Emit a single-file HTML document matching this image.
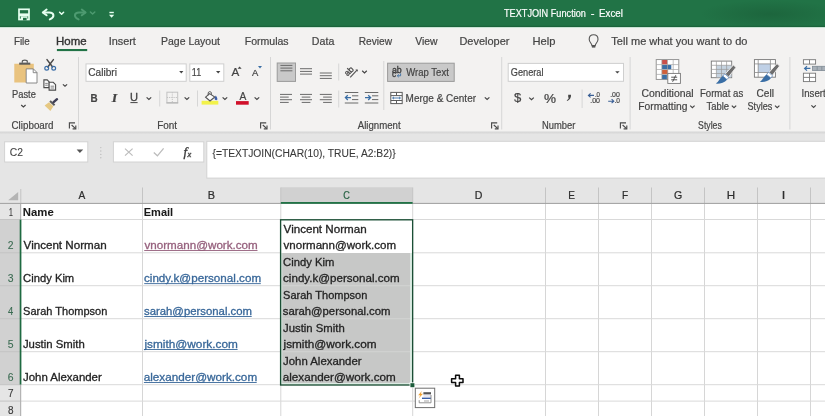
<!DOCTYPE html>
<html><head><meta charset="utf-8"><title>TEXTJOIN Function - Excel</title>
<style>
html,body{margin:0;padding:0;background:#fff}
body{width:825px;height:416px;overflow:hidden;position:relative;font-family:"Liberation Sans",sans-serif}
#bg{position:absolute;left:0;top:0;width:825px;height:416px;display:block;will-change:transform}
.t{position:absolute;line-height:1;white-space:pre;transform-origin:0 0;display:block}
.u{position:absolute;height:1px;display:block}
</style></head><body>
<svg id="bg" width="825" height="416" viewBox="0 0 825 416">
<defs>
<linearGradient id="shd" x1="0" y1="0" x2="0" y2="1"><stop offset="0" stop-color="#d2d2d2"/><stop offset="1" stop-color="#e5e5e5"/></linearGradient>
<radialGradient id="cl" cx="0.5" cy="0.5" r="0.5"><stop offset="0" stop-color="#1c643c" stop-opacity=".9"/><stop offset="1" stop-color="#1c643c" stop-opacity="0"/></radialGradient>
</defs>
<!-- title bar -->
<rect x="0" y="0" width="825" height="27.4" fill="#217346"/>
<ellipse cx="770" cy="14" rx="70" ry="14" fill="url(#cl)"/>
<rect x="0" y="25.8" width="825" height="1.4" fill="#1b633b"/>
<rect x="0" y="27.2" width="825" height="1.2" fill="#d9efe3"/>
<!-- ribbon -->
<rect x="0" y="28.2" width="825" height="103.5" fill="#f3f2f1"/>
<rect x="0" y="131.5" width="825" height="3" fill="url(#shd)"/>
<rect x="0" y="134" width="825" height="70" fill="#e5e5e5"/>
<!-- home underline -->
<rect x="56.9" y="49" width="30.3" height="2.1" fill="#217346"/>
<!-- group separators -->
<g fill="#d6d6d6">
<rect x="78" y="57" width="1" height="72.5"/>
<rect x="270" y="57" width="1" height="72.5"/>
<rect x="501.2" y="57" width="1" height="72.5"/>
<rect x="629.6" y="57" width="1" height="72.5"/>
<rect x="789.4" y="57" width="1" height="72.5"/>
<rect x="383.3" y="61" width="1" height="49"/>
<rect x="159.2" y="90.5" width="1" height="16"/>
<rect x="197" y="90.5" width="1" height="16"/>
<rect x="338.2" y="63.5" width="1" height="17"/>
<rect x="338.2" y="90.5" width="1" height="17"/>
<rect x="581.6" y="89.5" width="1" height="18.5"/>
</g>
<!-- ribbon boxes -->
<g fill="#fff" stroke="#cfcfcf" stroke-width="1">
<rect x="86" y="63.9" width="100.2" height="17.4"/>
<rect x="189.8" y="63.9" width="34" height="17.4"/>
<rect x="508.2" y="63.4" width="115.3" height="17.9"/>
</g>
<g fill="#c9c9c9" stroke="#9b9b9b" stroke-width="1">
<rect x="277.2" y="63" width="18.3" height="18.4"/>
<rect x="387.6" y="63.2" width="66.6" height="18.2"/>
</g>
<!-- formula bar -->
<g fill="#fff" stroke="#d2d2d2" stroke-width="1">
<rect x="4.6" y="141.8" width="83.2" height="20.2"/>
<rect x="113.4" y="141.8" width="90.4" height="20.2"/>
<rect x="206.8" y="141.3" width="640" height="36.8"/>
</g>
<!-- sheet -->
<rect x="0" y="203" width="21" height="213" fill="#e5e5e5"/>
<rect x="21" y="204" width="805" height="213" fill="#fff"/>
<!-- selected headers -->
<rect x="280.8" y="187.3" width="131.7" height="16" fill="#d1d1d1"/>
<rect x="0" y="219.6" width="20.8" height="165" fill="#d1d1d1"/>
<!-- selected gray cells -->
<rect x="281" y="253" width="131.5" height="132" fill="#dcebe3"/>
<rect x="282.3" y="253" width="127.7" height="130" fill="#c7c8c7"/>
<!-- grid lines vertical -->
<g fill="#d6d6d6">
<rect x="142" y="203.5" width="1" height="213"/>
<rect x="545" y="203.5" width="1" height="213"/>
<rect x="598" y="203.5" width="1" height="213"/>
<rect x="651" y="203.5" width="1" height="213"/>
<rect x="704" y="203.5" width="1" height="213"/>
<rect x="757" y="203.5" width="1" height="213"/>
<rect x="810" y="203.5" width="1" height="213"/>
<rect x="280.3" y="203.5" width="1" height="16"/><rect x="280.3" y="385" width="1" height="31"/>
<rect x="412.2" y="203.5" width="1" height="16"/><rect x="412.2" y="386" width="1" height="30"/>
</g>
<!-- grid lines horizontal -->
<g fill="#d9d9d9">
<rect x="20.8" y="219" width="805" height="1"/>
<rect x="20.8" y="252.3" width="260" height="1"/><rect x="413" y="252.3" width="412" height="1"/>
<rect x="20.8" y="285.2" width="260" height="1"/><rect x="413" y="285.2" width="412" height="1"/>
<rect x="20.8" y="318.2" width="260" height="1"/><rect x="413" y="318.2" width="412" height="1"/>
<rect x="20.8" y="351.2" width="260" height="1"/><rect x="413" y="351.2" width="412" height="1"/>
<rect x="20.8" y="384.2" width="260" height="1"/><rect x="413" y="384.2" width="412" height="1"/>
<rect x="20.8" y="400.6" width="805" height="1"/>
</g>
<g fill="#d3d4d3">
<rect x="282.3" y="285.2" width="127.7" height="1"/>
<rect x="282.3" y="318.2" width="127.7" height="1"/>
<rect x="282.3" y="351.2" width="127.7" height="1"/>
</g>
<!-- header lines -->
<g fill="#c4c4c4">
<rect x="20.3" y="189" width="1" height="14"/>
<rect x="142" y="187.5" width="1" height="16"/>
<rect x="280.3" y="187.5" width="1" height="16"/>
<rect x="412.2" y="187.5" width="1" height="16"/>
<rect x="545" y="187.5" width="1" height="16"/>
<rect x="598" y="187.5" width="1" height="16"/>
<rect x="651" y="187.5" width="1" height="16"/>
<rect x="704" y="187.5" width="1" height="16"/>
<rect x="757" y="187.5" width="1" height="16"/>
<rect x="810" y="187.5" width="1" height="16"/>
<rect x="0" y="219" width="20" height="1"/>
<rect x="0" y="252.3" width="20" height="1"/>
<rect x="0" y="285.2" width="20" height="1"/>
<rect x="0" y="318.2" width="20" height="1"/>
<rect x="0" y="351.2" width="20" height="1"/>
<rect x="0" y="384.2" width="20" height="1"/>
<rect x="0" y="400.6" width="20" height="1"/>
</g>
<rect x="0" y="202.9" width="825" height="1" fill="#a0a0a0"/>
<rect x="20.2" y="203" width="1" height="16.5" fill="#a8a8a8"/>
<rect x="20.2" y="385" width="1" height="31" fill="#a8a8a8"/>
<!-- corner triangle -->
<path d="M18.2 192 L18.2 200.2 L8.2 200.2 Z" fill="#b4b4b4"/>
<!-- green selection indicators -->
<rect x="280.8" y="202" width="131.8" height="1.8" fill="#217346"/>
<rect x="19.7" y="219.6" width="1.7" height="165" fill="#1e6a41"/>
<!-- selection border -->
<rect x="280.6" y="219.8" width="132.05" height="165.2" fill="none" stroke="#1b4f35" stroke-width="1.35"/>
<rect x="409.6" y="382.4" width="5.2" height="5.2" fill="#fff"/>
<rect x="410.4" y="383.2" width="4" height="4" fill="#1c5c3a"/>
<g style="opacity:.999">
<!-- ===== title bar icons ===== -->
<rect x="19" y="9.3" width="10" height="10.2" fill="none" stroke="#e6fff0" stroke-width="1.7"/>
<rect x="19" y="13.4" width="10" height="2.9" fill="#e6fff0"/>
<rect x="20.8" y="16.3" width="6.6" height="3.6" fill="#e6fff0"/>
<rect x="23" y="17.8" width="3.6" height="2.6" fill="#217346"/>
<g fill="none" stroke="#e6fff0" stroke-width="2" stroke-linecap="round" stroke-linejoin="round">
<path d="M46.6 9.5 L42.8 12.5 L46.6 15.3"/>
<path d="M43.4 12.5 H49.3 C54.4 12.5 55 17.4 49.8 19.4"/>
<path d="M59.6 12.3 L61.6 14.3 L63.6 12.3" stroke-width="1.5"/>
</g>
<g fill="none" stroke="#4d9a70" stroke-width="2" stroke-linecap="round" stroke-linejoin="round">
<path d="M81.8 9.5 L85.6 12.5 L81.8 15.3"/>
<path d="M85 12.5 H79 C73.9 12.5 73.4 17.4 78.6 19.4"/>
<path d="M90.4 12 L92.6 14 L94.8 12" stroke-width="1.5"/>
</g>
<rect x="109.4" y="11.8" width="4.4" height="1.4" fill="#e6fff0"/>
<path d="M109 14.8 H114.2 L111.6 17.8 Z" fill="#e6fff0"/>

<!-- lightbulb -->
<g fill="none" stroke="#555" stroke-width="1.1">
<path d="M591.9 45.6 C591.9 43.4 589.2 42.4 589.2 39.2 C589.2 36.4 591.2 34.7 593.6 34.7 C596 34.7 598 36.4 598 39.2 C598 42.4 595.3 43.4 595.3 45.6 Z"/>
</g>
<rect x="591.9" y="45.6" width="3.4" height="2" fill="#555"/>

<!-- ===== clipboard group ===== -->
<!-- paste -->
<path d="M14.3 63.7 H33.8 V69 H26 V82.6 H14.3 Z" fill="#e9c37f"/>
<rect x="19.2" y="62.6" width="11.1" height="2.1" fill="#5a5a5a"/>
<path d="M22.3 62.8 V61.4 C22.3 59.6 27.3 59.6 27.3 61.4 V62.8" fill="none" stroke="#5a5a5a" stroke-width="1.2"/>
<path d="M26.2 68.9 H33.4 L37 72.5 V83 H26.2 Z" fill="#fff" stroke="#7d7d7d" stroke-width="0.9"/>
<path d="M33.2 69 V72.7 H37" fill="none" stroke="#7d7d7d" stroke-width="0.9"/>
<path d="M21.2 105 L23.4 107 L25.6 105" fill="none" stroke="#444" stroke-width="1.2"/>
<!-- scissors -->
<g fill="none" stroke="#4a4a4a" stroke-width="1.5" stroke-linecap="round">
<path d="M47 59.6 L52.6 67"/><path d="M53.4 59.6 L47.8 67"/>
</g>
<circle cx="46.7" cy="68.3" r="1.9" fill="none" stroke="#3b6ea8" stroke-width="1.2"/>
<circle cx="53.7" cy="68.3" r="1.9" fill="none" stroke="#3b6ea8" stroke-width="1.2"/>
<!-- copy -->
<g fill="#fafafa" stroke="#4a4a4a" stroke-width="1.1">
<path d="M43.9 79.9 H47.2 L49.2 81.9 V87.6 H43.9 Z"/>
<path d="M49.1 82.3 H53.2 L55.6 84.7 V90.1 H49.1 Z"/>
</g>
<g stroke="#666" stroke-width="0.8"><path d="M45.2 83.4 H47.8 M45.2 85.2 H47.8 M50.6 86.2 H54.2 M50.6 88 H54.2"/></g>
<path d="M62.9 84.4 L65 86.3 L67.1 84.4" fill="none" stroke="#444" stroke-width="1.2"/>
<!-- format painter -->
<path d="M49 102.2 L53.4 106.2 L50.4 111 L44.6 105.4 Z" fill="#e6c882"/>
<path d="M50 101 L54.6 105.2" stroke="#5a5a5a" stroke-width="2" fill="none"/>
<path d="M57 99.2 L53.6 102.2" stroke="#3e3e55" stroke-width="2.4" stroke-linecap="round" fill="none"/>
<!-- dialog launchers -->
<g transform="translate(0,0)" fill="none" stroke="#4a4a4a" stroke-width="1.15">
<path d="M69.4 128.4 V122.8 H75"/><path d="M71.6 125 L75.6 128.6"/><path d="M75.8 125.6 V128.8 H72.6" />
</g>
<g transform="translate(191.2,0)" fill="none" stroke="#4a4a4a" stroke-width="1.15">
<path d="M69.4 128.4 V122.8 H75"/><path d="M71.6 125 L75.6 128.6"/><path d="M75.8 125.6 V128.8 H72.6" />
</g>
<g transform="translate(422.2,0)" fill="none" stroke="#4a4a4a" stroke-width="1.15">
<path d="M69.4 128.4 V122.8 H75"/><path d="M71.6 125 L75.6 128.6"/><path d="M75.8 125.6 V128.8 H72.6" />
</g>
<g transform="translate(551,0)" fill="none" stroke="#4a4a4a" stroke-width="1.15">
<path d="M69.4 128.4 V122.8 H75"/><path d="M71.6 125 L75.6 128.6"/><path d="M75.8 125.6 V128.8 H72.6" />
</g>

<!-- ===== font group ===== -->
<path d="M179.2 71 H183.4 L181.3 73.4 Z" fill="#444"/>
<path d="M216 71 H220.4 L218.2 73.4 Z" fill="#444"/>
<path d="M615.2 71.2 H619.6 L617.4 73.6 Z" fill="#444"/>
<path d="M237.6 68.7 H241.6 L239.6 66.4 Z" fill="#444"/>
<path d="M258 66 H262 L260 68.4 Z" fill="#3a6ea5"/>
<!-- chevrons row2 -->
<g fill="none" stroke="#444" stroke-width="1.2">
<path d="M146.6 97.4 L148.9 99.5 L151.2 97.4"/>
<path d="M184.6 97.4 L186.9 99.5 L189.2 97.4"/>
<path d="M222.6 97.4 L224.9 99.5 L227.2 97.4"/>
<path d="M254.6 97.4 L256.9 99.5 L259.2 97.4"/>
<path d="M362.2 70.8 L364.5 72.9 L366.8 70.8"/>
<path d="M484.8 97.4 L487.1 99.5 L489.4 97.4"/>
<path d="M529.2 97.6 L531.5 99.7 L533.8 97.6"/>
<path d="M690.2 105.6 L692.4 107.6 L694.6 105.6"/>
<path d="M731.8 105.6 L734 107.6 L736.2 105.6"/>
<path d="M775 105.6 L777.2 107.6 L779.4 105.6"/>
<path d="M811.4 105.4 L813.6 107.4 L815.8 105.4"/>
</g>
<!-- U underline -->
<rect x="130.4" y="102.1" width="7.2" height="1" fill="#444"/>
<!-- borders icon -->
<g fill="none" stroke="#c2c2c2" stroke-width="1">
<rect x="166.9" y="92.2" width="10.8" height="10.6"/>
<path d="M172.3 92.2 V102.8 M166.9 97.5 H177.7" stroke-dasharray="1.2 1"/>
</g>
<rect x="166.4" y="102.3" width="11.8" height="1.2" fill="#b5b5b5"/>
<!-- fill bucket -->
<rect x="201.6" y="100.8" width="16.7" height="3.8" fill="#f2f24a"/>
<path d="M205.6 97.2 L209.6 93.6 L214.8 97 L210 101 Z" fill="#fafafa" stroke="#555" stroke-width="1.1"/>
<path d="M208.2 95.4 V93 C208.2 91.2 211.4 91.2 211.4 93.2 V94.8" fill="none" stroke="#555" stroke-width="1"/>
<path d="M215.8 95.4 C217.4 97.4 217.6 99 217.2 99.8 C216.2 100.6 214.6 100 214.6 98.6 C214.6 97.4 215.2 96.4 215.8 95.4 Z" fill="#3d5ea8"/>
<!-- font color -->
<rect x="236" y="101.1" width="12.7" height="3.6" fill="#d0102a"/>

<!-- ===== alignment group ===== -->
<g fill="#6a6a6a">
<rect x="280.4" y="64.9" width="12" height="1"/><rect x="280.4" y="67.6" width="12" height="1"/><rect x="280.4" y="70.3" width="12" height="1"/>
<rect x="300" y="68.2" width="12" height="1"/><rect x="300" y="70.9" width="12" height="1"/><rect x="300" y="73.6" width="12" height="1"/>
<rect x="319.8" y="72.5" width="12" height="1"/><rect x="319.8" y="75.2" width="12" height="1"/><rect x="319.8" y="77.9" width="12" height="1"/>
<rect x="280" y="93.9" width="12" height="1"/><rect x="280" y="96.6" width="8.7" height="1"/><rect x="280" y="99.2" width="12" height="1"/><rect x="280" y="101.9" width="8.7" height="1"/>
<rect x="300" y="93.9" width="12" height="1"/><rect x="301.7" y="96.6" width="8.7" height="1"/><rect x="300" y="99.2" width="12" height="1"/><rect x="301.7" y="101.9" width="8.7" height="1"/>
<rect x="319.8" y="93.9" width="12" height="1"/><rect x="323.1" y="96.6" width="8.7" height="1"/><rect x="319.8" y="99.2" width="12" height="1"/><rect x="323.1" y="101.9" width="8.7" height="1"/>
<!-- indent icons lines -->
<rect x="344.8" y="92" width="13.5" height="1"/><rect x="352" y="95.3" width="6.3" height="1"/><rect x="352" y="99.1" width="6.3" height="1"/><rect x="344.8" y="102.5" width="13.5" height="1"/>
<rect x="364.8" y="92" width="13.5" height="1"/><rect x="372" y="95.3" width="6.3" height="1"/><rect x="372" y="99.1" width="6.3" height="1"/><rect x="364.8" y="102.5" width="13.5" height="1"/>
</g>
<g fill="none" stroke="#3a6ea5" stroke-width="1.3">
<path d="M351 97.6 H345.6 M347.8 95.2 L345.4 97.6 L347.8 100"/>
<path d="M365 97.6 H370.4 M368.2 95.2 L370.6 97.6 L368.2 100"/>
</g>
<!-- orientation -->
<path d="M350.2 77.4 L357 70.2" stroke="#555" stroke-width="1.2"/>
<path d="M355.4 69.4 L357.8 69.4 L357.8 71.8 Z" fill="#555"/>
<text transform="translate(347.6,76.6) rotate(-45)" font-family="Liberation Sans, sans-serif" font-size="8.6" fill="#444" stroke="#444" stroke-width="0.3">ab</text>
<!-- wrap icon -->
<text x="391.9" y="72.5" font-family="Liberation Sans, sans-serif" font-size="8.2" fill="#3c3c3c" stroke="#3c3c3c" stroke-width="0.3" textLength="9.8" lengthAdjust="spacingAndGlyphs">ab</text>
<text x="391.9" y="77.4" font-family="Liberation Sans, sans-serif" font-size="8.2" fill="#3c3c3c" stroke="#3c3c3c" stroke-width="0.3">c</text>
<path d="M400.6 73.4 V75.8 H397.4 M398.8 74.4 L397.3 75.8 L398.8 77.2" fill="none" stroke="#3a6ea5" stroke-width="0.9"/>
<!-- merge icon -->
<g fill="#fff" stroke="#5c5c5c" stroke-width="1">
<rect x="390.8" y="92.4" width="11.4" height="11.2"/>
</g>
<path d="M390.8 95.6 H402.2 M390.8 100.5 H402.2 M396.5 92.4 V95.6 M396.5 100.5 V103.6" stroke="#5c5c5c" stroke-width="1" fill="none"/>
<path d="M392.6 98 H400.4 M394 96.8 L392.6 98 L394 99.2 M399 96.8 L400.4 98 L399 99.2" stroke="#3a6ea5" stroke-width="0.9" fill="none"/>

<!-- ===== number group ===== -->
<path d="M568.2 94.8 H571 C571.2 97.6 570 100 567 101 L566.8 100.2 C568.4 99.4 568.8 98.6 568.6 97.6 H568.2 Z" fill="#444"/>
<g font-family="Liberation Sans, sans-serif" font-size="6.9" fill="#4a4a4a" stroke="#4a4a4a" stroke-width="0.2">
<text x="594.9" y="96.8" textLength="5.1" lengthAdjust="spacingAndGlyphs">.0</text>
<text x="590.2" y="103.2" textLength="9.8" lengthAdjust="spacingAndGlyphs">.00</text>
<text x="610.2" y="96.8" textLength="9.7" lengthAdjust="spacingAndGlyphs">.00</text>
<text x="614.4" y="103.2" textLength="5.5" lengthAdjust="spacingAndGlyphs">.0</text>
</g>
<g fill="none" stroke="#3a5f95" stroke-width="1.1">
<path d="M594 95.4 H588.6 M590.6 93.4 L588.4 95.4 L590.6 97.4"/>
<path d="M608.2 101.2 H613.6 M611.6 99.2 L613.8 101.2 L611.6 103.2"/>
</g>

<!-- ===== styles group ===== -->
<!-- conditional formatting -->
<rect x="656.2" y="59.6" width="22.6" height="19.8" fill="#fff" stroke="#8a8a8a" stroke-width="0.9"/>
<rect x="661.9" y="60" width="5.5" height="4.6" fill="#c9504a"/>
<rect x="661.9" y="65" width="9.4" height="4.4" fill="#3a6ea5"/>
<rect x="661.9" y="69.9" width="6.2" height="4.4" fill="#d0603a"/>
<rect x="661.9" y="74.8" width="5" height="4.3" fill="#3a6ea5"/>
<path d="M661.8 59.6 V79.4 M667.5 59.6 V79.4 M673.2 59.6 V79.4 M656.2 64.6 H678.8 M656.2 69.5 H678.8 M656.2 74.4 H678.8" stroke="#a5a5a5" stroke-width="0.7" fill="none"/>
<rect x="667.8" y="73.4" width="12.6" height="10" fill="#fff" stroke="#777" stroke-width="0.9"/>
<path d="M671.2 77.2 H677.2 M671.2 79.8 H677.2 M675.8 75.2 L672.6 81.8" stroke="#444" stroke-width="0.9" fill="none"/>
<!-- format as table -->
<rect x="711.3" y="61.1" width="20.4" height="16.6" fill="#fff" stroke="#777" stroke-width="0.9"/>
<rect x="716.4" y="65.3" width="15" height="12" fill="#c5d3e0"/>
<path d="M716.4 61.1 V77.7 M721.5 61.1 V77.7 M726.6 61.1 V77.7 M711.3 65.3 H731.7 M711.3 69.4 H731.7 M711.3 73.5 H731.7" stroke="#9a9a9a" stroke-width="0.7" fill="none"/>
<path d="M733.4 65 L736 67.4 L728.6 77 L725.2 74 Z" fill="#6e6e6e" stroke="#f3f2f1" stroke-width="0.9"/>
<path d="M724.8 73.8 L728.8 77.4 L727 79.6 L722.8 76 Z" fill="#fff" stroke="#4a78b0" stroke-width="0.7"/>
<path d="M722.6 76 L727 79.8 C724.6 83 720 83.8 715.8 83.6 C718.6 81.8 720 78 722.6 76 Z" fill="#3a6ea5"/>
<!-- cell styles -->
<rect x="754.4" y="59.6" width="21" height="17.6" fill="#fff" stroke="#777" stroke-width="0.9"/>
<rect x="758.2" y="63.9" width="12.2" height="8.6" fill="#bfd0e6"/>
<path d="M758.2 59.6 V77.2 M770.4 59.6 V77.2 M754.4 63.9 H775.4 M754.4 72.5 H775.4" stroke="#8a8a8a" stroke-width="0.8" fill="none"/>
<path d="M777 63.6 L779.6 66 L772.4 75.4 L769 72.4 Z" fill="#6e6e6e" stroke="#f3f2f1" stroke-width="0.9"/>
<path d="M768.6 72.2 L772.6 75.8 L770.8 78 L766.6 74.4 Z" fill="#fff" stroke="#4a78b0" stroke-width="0.7"/>
<path d="M766.4 74.4 L770.8 78.2 C768.4 81.4 764 82.2 759.8 82 C762.6 80.2 763.8 76.4 766.4 74.4 Z" fill="#3a6ea5"/>
<!-- insert -->
<g fill="#fff" stroke="#777" stroke-width="0.9">
<rect x="803.4" y="59.7" width="12.2" height="4.4"/>
<rect x="803.4" y="73.2" width="12.2" height="8.4"/>
</g>
<path d="M809.5 59.7 V64.1 M809.5 73.2 V81.6 M803.4 77.4 H815.6" stroke="#777" stroke-width="0.9"/>
<rect x="812.6" y="66.3" width="14" height="4.2" fill="#a9b1b9" stroke="#7f8a94" stroke-width="0.8"/>
<path d="M817.2 66.3 V70.5 M821.8 66.3 V70.5" stroke="#7f8a94" stroke-width="0.8"/>
<path d="M810.4 68.4 H804.8 M807 66.2 L804.6 68.4 L807 70.6" fill="none" stroke="#3a6ea5" stroke-width="1.2"/>

<!-- ===== formula bar ===== -->
<path d="M76.6 149.5 H83.2 L79.9 152.9 Z" fill="#555"/>
<g fill="#bdbdbd"><circle cx="100.8" cy="147.6" r="0.7"/><circle cx="100.8" cy="151" r="0.7"/><circle cx="100.8" cy="154.4" r="0.7"/><circle cx="100.8" cy="157.8" r="0.7"/></g>
<path d="M125 148.6 L132.6 155.6 M132.6 148.6 L125 155.6" stroke="#bcbcbc" stroke-width="1.2" fill="none"/>
<path d="M153.8 152.6 L157.4 155.8 L163.6 148.4" stroke="#bcbcbc" stroke-width="1.3" fill="none"/>
<text x="183.6" y="155.6" font-family="Liberation Serif, serif" font-style="italic" font-size="13" fill="#3c3c3c" stroke="#3c3c3c" stroke-width="0.35">f</text>
<text x="187.6" y="156.6" font-family="Liberation Serif, serif" font-style="italic" font-size="8.5" fill="#3c3c3c" stroke="#3c3c3c" stroke-width="0.35">x</text>

<!-- ===== quick analysis & cursor ===== -->
<rect x="415.3" y="388.2" width="19.4" height="19.4" fill="#fff" stroke="#6e6e6e" stroke-width="1"/>
<path d="M421.8 391 L418.2 395.2 H420.4 L418.6 398.4 L423 393.8 H420.8 Z" fill="#f0a030"/>
<rect x="423.4" y="392.2" width="7.6" height="2.4" fill="#555"/>
<rect x="423.4" y="394.6" width="7.6" height="2.6" fill="#e8e8f0"/>
<rect x="422" y="397.6" width="9" height="1.4" fill="#3a5fa8"/>
<path d="M419.2 400.2 V402.8 H431 V395" fill="none" stroke="#888" stroke-width="0.9"/>
<rect x="424" y="400.2" width="5" height="1.6" fill="#c8c8c8"/>
<!-- cursor -->
<path d="M455.6 375.3 H459.4 V378.7 H463 V382.5 H459.4 V386.1 H455.6 V382.5 H451.6 V378.7 H455.6 Z" fill="#fff" stroke="#0c0c0c" stroke-width="1.5" stroke-linejoin="round"/>

</g>
<g font-family="Liberation Sans, sans-serif" style="white-space:pre;opacity:.999">
<text transform="translate(503.99,16.60) scale(0.8491,1)" font-size="10.8" fill="#fff" stroke="#fff" stroke-width="0.2">TEXTJOIN Function</text>
<text transform="translate(590.77,16.60) scale(1.0545,1)" font-size="10.8" fill="#fff" stroke="#fff" stroke-width="0.2">-</text>
<text transform="translate(599.10,16.60) scale(0.9010,1)" font-size="10.8" fill="#fff" stroke="#fff" stroke-width="0.2">Excel</text>
<text transform="translate(13.90,44.70) scale(0.9397,1)" font-size="10.5" fill="#444" stroke="#444" stroke-width="0.2">File</text>
<text transform="translate(56.08,44.70) scale(1.0926,1)" font-size="10.5" fill="#333" stroke="#333" stroke-width="0.35">Home</text>
<text transform="translate(108.66,44.70) scale(1.0376,1)" font-size="10.5" fill="#444" stroke="#444" stroke-width="0.2">Insert</text>
<text transform="translate(161.05,44.70) scale(0.9991,1)" font-size="10.5" fill="#444" stroke="#444" stroke-width="0.2">Page Layout</text>
<text transform="translate(244.75,44.70) scale(1.0035,1)" font-size="10.5" fill="#444" stroke="#444" stroke-width="0.2">Formulas</text>
<text transform="translate(311.84,44.70) scale(1.0140,1)" font-size="10.5" fill="#444" stroke="#444" stroke-width="0.2">Data</text>
<text transform="translate(358.67,44.70) scale(0.9689,1)" font-size="10.5" fill="#444" stroke="#444" stroke-width="0.2">Review</text>
<text transform="translate(415.20,44.70) scale(0.9911,1)" font-size="10.5" fill="#444" stroke="#444" stroke-width="0.2">View</text>
<text transform="translate(459.41,44.70) scale(1.0468,1)" font-size="10.5" fill="#444" stroke="#444" stroke-width="0.2">Developer</text>
<text transform="translate(532.40,44.70) scale(1.0634,1)" font-size="10.5" fill="#444" stroke="#444" stroke-width="0.2">Help</text>
<text transform="translate(611.34,44.70) scale(1.0512,1)" font-size="10.5" fill="#444" stroke="#444" stroke-width="0.2">Tell me what you want to do</text>
<text transform="translate(12.03,97.60) scale(0.8893,1)" font-size="10.5" fill="#444" stroke="#444" stroke-width="0.2">Paste</text>
<text transform="translate(11.53,129.20) scale(0.9349,1)" font-size="10.5" fill="#444" stroke="#444" stroke-width="0.2">Clipboard</text>
<text transform="translate(157.19,129.20) scale(0.9481,1)" font-size="10.5" fill="#444" stroke="#444" stroke-width="0.2">Font</text>
<text transform="translate(357.70,129.20) scale(0.9183,1)" font-size="10.5" fill="#444" stroke="#444" stroke-width="0.2">Alignment</text>
<text transform="translate(542.03,129.20) scale(0.8959,1)" font-size="10.5" fill="#444" stroke="#444" stroke-width="0.2">Number</text>
<text transform="translate(698.09,129.20) scale(0.8288,1)" font-size="10.5" fill="#444" stroke="#444" stroke-width="0.2">Styles</text>
<text transform="translate(88.32,75.90) scale(0.9649,1)" font-size="10.5" fill="#444" stroke="#444" stroke-width="0.2">Calibri</text>
<text transform="translate(191.86,75.90) scale(0.8513,1)" font-size="10.5" fill="#444" stroke="#444" stroke-width="0.2">11</text>
<text transform="translate(90.50,101.60) scale(0.9385,1)" font-size="10.5" fill="#444" font-weight="bold" stroke="#444" stroke-width="0.2">B</text>
<text transform="translate(111.70,101.60) scale(1.2211,1)" font-size="11.5" fill="#444" font-weight="bold" font-style="italic" font-family="Liberation Serif, serif" stroke="#444" stroke-width="0.2">I</text>
<text transform="translate(129.91,101.30) scale(1.0560,1)" font-size="10.5" fill="#444" stroke="#444" stroke-width="0.3">U</text>
<text transform="translate(406.30,75.90) scale(0.9070,1)" font-size="10.5" fill="#444" stroke="#444" stroke-width="0.2">Wrap Text</text>
<text transform="translate(405.59,102.10) scale(0.9515,1)" font-size="10.5" fill="#444" stroke="#444" stroke-width="0.2">Merge &amp; Center</text>
<text transform="translate(510.86,75.90) scale(0.8745,1)" font-size="10.5" fill="#444" stroke="#444" stroke-width="0.2">General</text>
<text transform="translate(513.96,102.00) scale(0.9714,1)" font-size="13.5" fill="#444" stroke="#444" stroke-width="0.2">$</text>
<text transform="translate(544.04,102.50) scale(1.1282,1)" font-size="12" fill="#444" stroke="#444" stroke-width="0.2">%</text>
<text transform="translate(641.50,97.40) scale(0.9932,1)" font-size="10.5" fill="#444" stroke="#444" stroke-width="0.2">Conditional</text>
<text transform="translate(638.26,110.40) scale(0.9805,1)" font-size="10.5" fill="#444" stroke="#444" stroke-width="0.2">Formatting</text>
<text transform="translate(699.91,97.40) scale(0.9168,1)" font-size="10.5" fill="#444" stroke="#444" stroke-width="0.2">Format as</text>
<text transform="translate(706.47,110.40) scale(0.9020,1)" font-size="10.5" fill="#444" stroke="#444" stroke-width="0.2">Table</text>
<text transform="translate(756.52,97.40) scale(0.9647,1)" font-size="10.5" fill="#444" stroke="#444" stroke-width="0.2">Cell</text>
<text transform="translate(747.57,110.40) scale(0.8649,1)" font-size="10.5" fill="#444" stroke="#444" stroke-width="0.2">Styles</text>
<text transform="translate(801.59,97.40) scale(0.9149,1)" font-size="10.5" fill="#444" stroke="#444" stroke-width="0.2">Insert</text>
<text transform="translate(231.60,76.30) scale(1.0621,1)" font-size="11" fill="#444" stroke="#444" stroke-width="0.2">A</text>
<text transform="translate(252.00,76.30) scale(1.0957,1)" font-size="8.6" fill="#444" stroke="#444" stroke-width="0.2">A</text>
<text transform="translate(239.60,100.40) scale(0.9926,1)" font-size="10.3" fill="#444" stroke="#444" stroke-width="0.2">A</text>
<text transform="translate(9.72,156.30) scale(0.9569,1)" font-size="10.8" fill="#444" stroke="#444" stroke-width="0.1">C2</text>
<text transform="translate(212.57,157.10) scale(0.9347,1)" font-size="11" fill="#3a3a3a" stroke="#3a3a3a" stroke-width="0.1">{=TEXTJOIN(CHAR(10), TRUE, A2:B2)}</text>
<text transform="translate(78.60,199.00) scale(0.9571,1)" font-size="10.6" fill="#2e2e2e" stroke="#2e2e2e" stroke-width="0.22">A</text>
<text transform="translate(207.83,199.00) scale(1.0261,1)" font-size="10.6" fill="#2e2e2e" stroke="#2e2e2e" stroke-width="0.22">B</text>
<text transform="translate(474.75,199.00) scale(1.0000,1)" font-size="10.6" fill="#2e2e2e" stroke="#2e2e2e" stroke-width="0.22">D</text>
<text transform="translate(568.29,199.00) scale(0.9500,1)" font-size="10.6" fill="#2e2e2e" stroke="#2e2e2e" stroke-width="0.22">E</text>
<text transform="translate(621.89,199.00) scale(0.9524,1)" font-size="10.6" fill="#2e2e2e" stroke="#2e2e2e" stroke-width="0.22">F</text>
<text transform="translate(673.90,199.00) scale(1.0000,1)" font-size="10.6" fill="#2e2e2e" stroke="#2e2e2e" stroke-width="0.22">G</text>
<text transform="translate(726.77,199.00) scale(1.1000,1)" font-size="10.6" fill="#2e2e2e" stroke="#2e2e2e" stroke-width="0.22">H</text>
<text transform="translate(781.80,199.00) scale(1.2000,1)" font-size="10.6" fill="#2e2e2e" stroke="#2e2e2e" stroke-width="0.22">I</text>
<text transform="translate(343.37,199.00) scale(0.8593,1)" font-size="10.6" fill="#2a6446" stroke="#2a6446" stroke-width="0.22">C</text>
<text transform="translate(9.10,216.00) scale(0.6667,1)" font-size="10.3" fill="#383838" stroke="#383838" stroke-width="0.15">1</text>
<text transform="translate(7.92,397.30) scale(0.9684,1)" font-size="10.3" fill="#383838" stroke="#383838" stroke-width="0.15">7</text>
<text transform="translate(7.92,413.60) scale(0.9684,1)" font-size="10.3" fill="#383838" stroke="#383838" stroke-width="0.15">8</text>
<text transform="translate(7.79,248.80) scale(1.0105,1)" font-size="10.3" fill="#3b6b52" stroke="#3b6b52" stroke-width="0.1">2</text>
<text transform="translate(7.79,282.00) scale(1.0105,1)" font-size="10.3" fill="#3b6b52" stroke="#3b6b52" stroke-width="0.1">3</text>
<text transform="translate(8.07,315.00) scale(0.9143,1)" font-size="10.3" fill="#3b6b52" stroke="#3b6b52" stroke-width="0.1">4</text>
<text transform="translate(7.79,348.00) scale(1.0105,1)" font-size="10.3" fill="#3b6b52" stroke="#3b6b52" stroke-width="0.1">5</text>
<text transform="translate(7.79,381.00) scale(1.0105,1)" font-size="10.3" fill="#3b6b52" stroke="#3b6b52" stroke-width="0.1">6</text>
<text transform="translate(22.83,216.00) scale(1.0330,1)" font-size="11" fill="#1a1a1a" font-weight="bold" stroke="#1a1a1a" stroke-width="0.05">Name</text>
<text transform="translate(143.75,216.00) scale(1.0018,1)" font-size="11" fill="#1a1a1a" font-weight="bold" stroke="#1a1a1a" stroke-width="0.05">Email</text>
<text transform="translate(23.60,249.00) scale(1.0564,1)" font-size="11" fill="#242424" stroke="#242424" stroke-width="0.3">Vincent Norman</text>
<text transform="translate(23.09,282.10) scale(1.0204,1)" font-size="11" fill="#242424" stroke="#242424" stroke-width="0.3">Cindy Kim</text>
<text transform="translate(23.10,315.00) scale(1.0012,1)" font-size="11" fill="#242424" stroke="#242424" stroke-width="0.3">Sarah Thompson</text>
<text transform="translate(22.94,348.00) scale(1.0339,1)" font-size="11" fill="#242424" stroke="#242424" stroke-width="0.3">Justin Smith</text>
<text transform="translate(22.94,381.00) scale(1.0397,1)" font-size="11" fill="#242424" stroke="#242424" stroke-width="0.3">John Alexander</text>
<text transform="translate(144.50,249.00) scale(1.0582,1)" font-size="11" fill="#955f7c" stroke="#955f7c" stroke-width="0.3">vnormann@work.com</text><rect x="144.20" y="250.10" width="113.30" height="0.9" fill="#955f7c"/>
<text transform="translate(143.97,282.10) scale(1.0594,1)" font-size="11" fill="#386799" stroke="#386799" stroke-width="0.3">cindy.k@personal.com</text><rect x="144.20" y="283.20" width="116.60" height="0.9" fill="#386799"/>
<text transform="translate(143.98,315.00) scale(1.0329,1)" font-size="11" fill="#386799" stroke="#386799" stroke-width="0.3">sarah@personal.com</text><rect x="144.20" y="316.10" width="107.50" height="0.9" fill="#386799"/>
<text transform="translate(144.47,348.00) scale(1.0763,1)" font-size="11" fill="#386799" stroke="#386799" stroke-width="0.3">jsmith@work.com</text><rect x="143.90" y="349.10" width="93.70" height="0.9" fill="#386799"/>
<text transform="translate(143.67,381.00) scale(1.0660,1)" font-size="11" fill="#386799" stroke="#386799" stroke-width="0.3">alexander@work.com</text><rect x="143.90" y="382.10" width="112.80" height="0.9" fill="#386799"/>
<text transform="translate(283.60,233.00) scale(1.0564,1)" font-size="11" fill="#242424" stroke="#242424" stroke-width="0.3">Vincent Norman</text>
<text transform="translate(283.60,249.00) scale(1.0516,1)" font-size="11" fill="#242424" stroke="#242424" stroke-width="0.3">vnormann@work.com</text>
<text transform="translate(283.09,265.80) scale(1.0224,1)" font-size="11" fill="#242424" stroke="#242424" stroke-width="0.3">Cindy Kim</text>
<text transform="translate(283.07,282.10) scale(1.0539,1)" font-size="11" fill="#242424" stroke="#242424" stroke-width="0.3">cindy.k@personal.com</text>
<text transform="translate(283.10,298.70) scale(1.0000,1)" font-size="11" fill="#242424" stroke="#242424" stroke-width="0.3">Sarah Thompson</text>
<text transform="translate(282.79,315.00) scale(1.0290,1)" font-size="11" fill="#242424" stroke="#242424" stroke-width="0.3">sarah@personal.com</text>
<text transform="translate(283.04,331.50) scale(1.0322,1)" font-size="11" fill="#242424" stroke="#242424" stroke-width="0.3">Justin Smith</text>
<text transform="translate(283.57,348.00) scale(1.0705,1)" font-size="11" fill="#242424" stroke="#242424" stroke-width="0.3">jsmith@work.com</text>
<text transform="translate(283.04,364.80) scale(1.0371,1)" font-size="11" fill="#242424" stroke="#242424" stroke-width="0.3">John Alexander</text>
<text transform="translate(282.77,381.20) scale(1.0613,1)" font-size="11" fill="#242424" stroke="#242424" stroke-width="0.3">alexander@work.com</text>
</g>
</svg>
</body></html>
